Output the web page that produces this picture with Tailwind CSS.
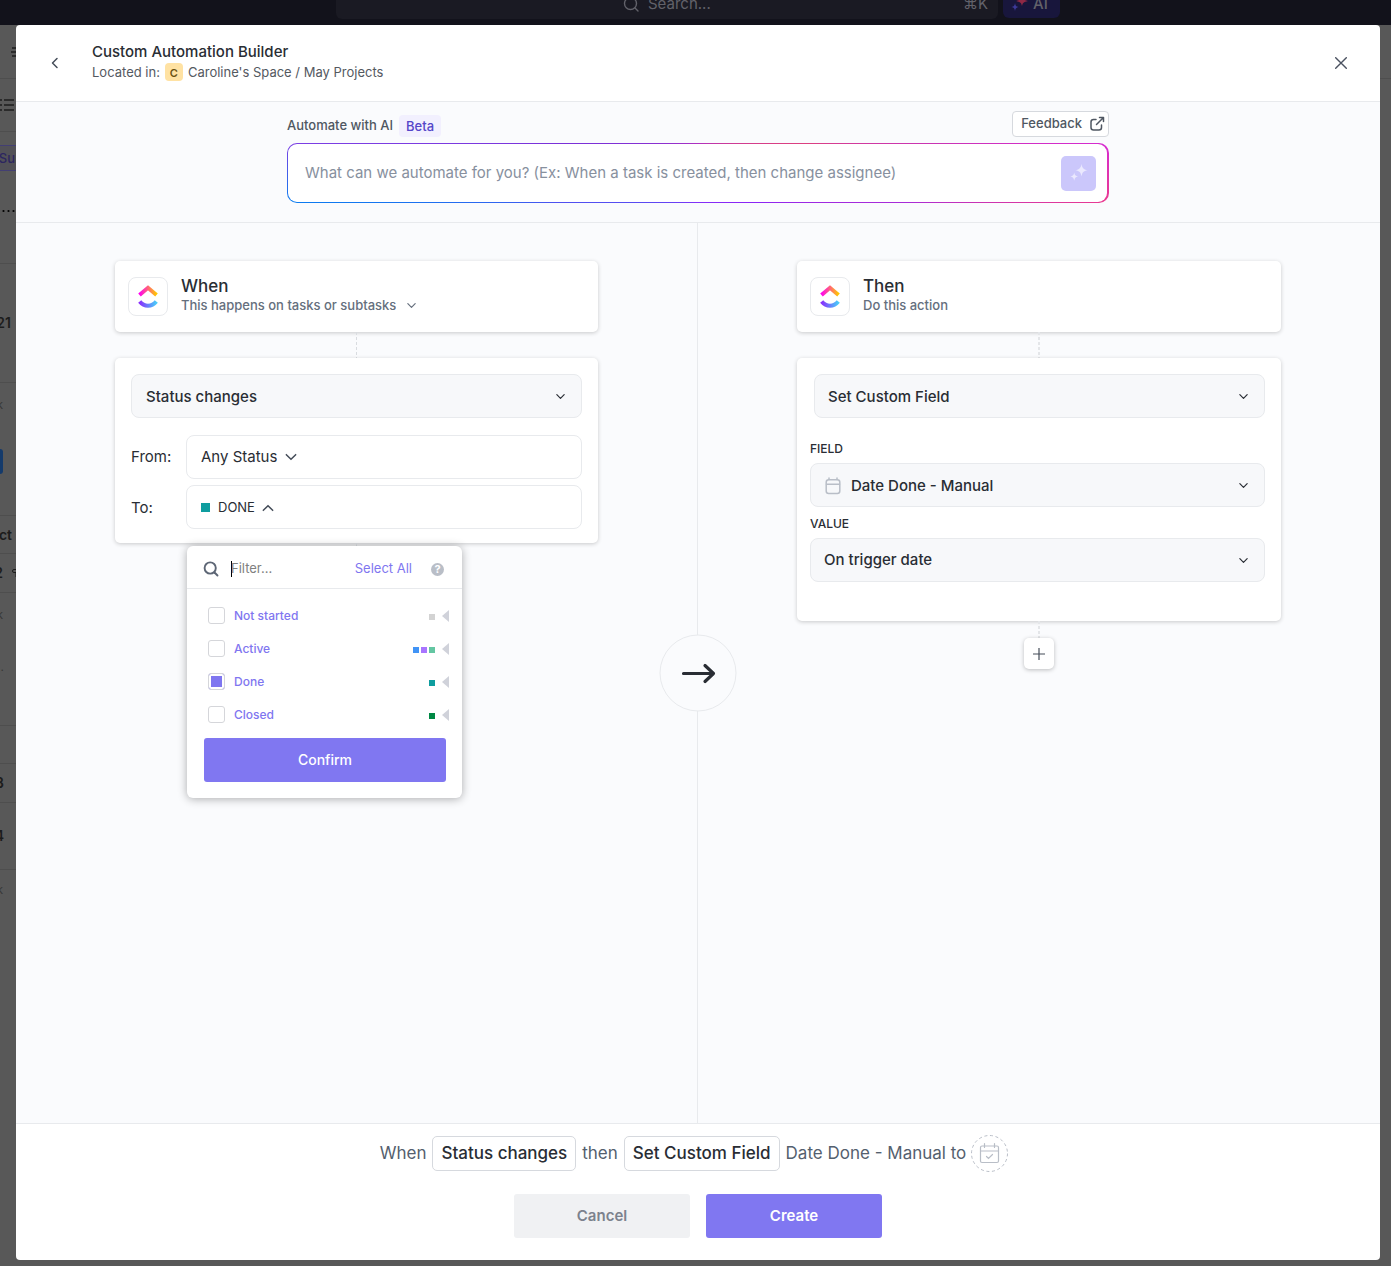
<!DOCTYPE html>
<html lang="en">
<head>
<meta charset="utf-8">
<meta name="viewport" content="width=device-width, initial-scale=1">
<title>Custom Automation Builder</title>
<script src="https://cdn.jsdelivr.net/npm/@tailwindcss/browser@4"></script>
</head>
<body class="relative flex min-h-screen flex-col bg-[#585858] font-['Inter',sans-serif] text-[#292d34]">

<svg class="absolute size-0" aria-hidden="true">
  <defs>
    <linearGradient id="logo-top" x1="0" x2="1" y1="0" y2="0"><stop offset="0" stop-color="#ff02f0"/><stop offset="1" stop-color="#ffc800"/></linearGradient>
    <linearGradient id="logo-bottom" x1="0" x2="1" y1="0" y2="0"><stop offset="0" stop-color="#8930fd"/><stop offset="1" stop-color="#49ccf9"/></linearGradient>
    <symbol id="down" viewBox="0 0 12 12"><path d="M2 4l4 4 4-4" fill="none" stroke="currentColor" stroke-width="1.300" stroke-linecap="round" stroke-linejoin="round"/></symbol>
    <symbol id="spark" viewBox="0 0 20 20"><path d="M12.500 1c.8 4.200 1.900 5.400 6 6.200-4.100.8-5.200 2-6 6.200-.8-4.200-1.900-5.400-6-6.200 4.100-.8 5.200-2 6-6.200zM5.200 9.500c.5 2.700 1.200 3.400 3.800 4-2.600.7-3.300 1.400-3.800 4.200-.5-2.800-1.200-3.500-3.800-4.200 2.600-.6 3.300-1.300 3.800-4z"/></symbol>
  </defs>
</svg>

<!-- App behind the dialog -->
<header class="relative grid h-[25px] grid-cols-[336px_1fr_57px_331px] overflow-hidden bg-[#12121b] text-[#62626a]">
  <div class="col-start-2 mr-[5px] flex h-[19px] items-start justify-between rounded-b-md bg-[#1a1a23] pr-2.5 pl-[287px] text-[15px] leading-4">
    <span class="-mt-1 flex gap-[9px]">
      <svg class="size-4" viewBox="0 0 16 16" fill="none" stroke="currentColor" stroke-width="1.4" stroke-linecap="round"><circle cx="7.500" cy="7.500" r="6"/><path d="M12 12l3 3"/></svg>
      Search...
    </span>
    <span class="-mt-1">⌘K</span>
  </div>
  <div class="flex h-[18px] items-start gap-1 rounded-b-md bg-[#18163c] pl-2 text-[15px] leading-4 font-medium">
    <svg class="-mt-1.5 h-[18px] w-[18px]" viewBox="0 0 18 18"><path d="M11 0c.7 5 1.500 6 6 7-4.500 1-5.300 2-6 5-.7-3-1.500-4-6-5 4.500-1 5.300-2 6-7z" fill="#8f2945"/><path d="M4 9c.4 2.800 1 3.400 3.500 4-2.500.6-3.100 1.200-3.500 4-.4-2.800-1-3.400-3.500-4C3 12.400 3.600 11.800 4 9z" fill="#3d3a9a"/></svg>
    <span class="-mt-1">AI</span>
  </div>
</header>
<div class="relative flex-1">
  <div class="h-[54px] border-b border-[#4e4e4e]"></div>
  <div class="absolute inset-y-0 left-0 w-4 overflow-hidden text-sm font-semibold text-[#1c1c1c]" aria-hidden="true">
    <div class="flex h-[54px] items-center justify-end border-b border-[#4e4e4e]">
      <svg class="h-3 w-[5px]" viewBox="0 0 5 12" stroke="currentColor" stroke-width="1.500"><path d="M1 2h4M0 6h5M1 10h4"/></svg>
    </div>
    <div class="flex h-[53px] items-center border-b border-[#4e4e4e]">
      <svg class="h-3.5 w-4" viewBox="0 0 16 14" stroke="currentColor" stroke-width="1.400"><path d="M4 2h10M4 7h10M4 12h10M0 2h2M0 7h2M0 12h2"/></svg>
    </div>
    <div class="h-[132px] border-b border-[#4e4e4e] pt-[13px]">
      <div class="flex h-[26px] items-center justify-end border-y border-[#433f73] bg-[#525157] pr-px text-[13px] font-medium text-[#2c2560]">Su</div>
      <svg class="mt-[38px] ml-0.5 h-1 w-3.5" viewBox="0 0 14 4"><circle cx="1.500" cy="2" r="1.100"/><circle cx="6.500" cy="2" r="1.100"/><circle cx="11.500" cy="2" r="1.100"/></svg>
    </div>
    <div class="flex h-[119px] items-center justify-end border-b border-[#4e4e4e] pr-[5px]">21</div>
    <div class="h-[133px] border-b border-[#4e4e4e] pt-3 text-xs font-normal text-[#383838]">
      <div class="flex h-5 items-center justify-end pr-[13px]">k</div>
      <div class="mt-[34px] h-[25px] w-[3px] rounded-r-sm bg-[#143a6b]"></div>
    </div>
    <div class="flex h-[38px] items-center justify-end border-b border-[#4e4e4e] pr-1">ct</div>
    <div class="flex h-[39px] items-center justify-end gap-[9px] border-b border-[#4e4e4e]">2
      <svg class="h-2.5 w-1 shrink-0" viewBox="0 0 4 10" fill="none" stroke="currentColor"><path d="M4 1.500H2a1 1 0 0 0 0 3h2M4 4v5"/></svg>
    </div>
    <div class="h-[133px] border-b border-[#4e4e4e] pt-3 text-xs font-normal text-[#383838]">
      <div class="flex h-5 items-center justify-end pr-[13px]">k</div>
      <div class="mt-[34px] flex justify-end pr-3">.</div>
    </div>
    <div class="h-[38px] border-b border-[#4e4e4e]"></div>
    <div class="flex h-[39px] items-center justify-end border-b border-[#4e4e4e] pr-3">3</div>
    <div class="flex h-[67px] items-center justify-end border-b border-[#4e4e4e] pr-3">4</div>
    <div class="flex justify-end pt-3 pr-[13px] text-xs font-normal text-[#383838]">k</div>
  </div>
</div>

<!-- Dialog -->
<main role="dialog" aria-labelledby="dialog-title" class="absolute top-[25px] right-[11px] bottom-1.5 left-4 flex flex-col rounded-[4px] bg-white">
  <header class="flex h-[77px] shrink-0 items-center border-b border-[#e8eaed] px-[27px]">
    <button type="button" aria-label="Back" class="grid size-6 place-items-center text-[#454d59]">
      <svg class="size-3" viewBox="0 0 12 12" fill="none" stroke="currentColor" stroke-width="1.500" stroke-linecap="round" stroke-linejoin="round"><path d="M8 1.500L3.500 6 8 10.500"/></svg>
    </button>
    <div class="ml-[25px] flex-1 pb-0.5">
      <h1 id="dialog-title" class="text-[15px] leading-5 font-medium">Custom Automation Builder</h1>
      <p class="flex items-center text-[13px] leading-5 text-[#54595f]">Located in:
        <span class="mx-[5px] grid size-[18px] place-items-center rounded-[4px] bg-[#ffe2a3] text-[11px] font-semibold text-[#6b5210]">C</span>Caroline's Space / May Projects</p>
    </div>
    <button type="button" aria-label="Close" class="grid size-6 place-items-center text-[#4a5160]">
      <svg class="size-3" viewBox="0 0 12 12" fill="none" stroke="currentColor" stroke-width="1.400" stroke-linecap="round"><path d="M.7.7l10.600 10.600M11.300.7L.7 11.300"/></svg>
    </button>
  </header>

  <section class="h-[121px] shrink-0 border-b border-[#e8eaed] bg-[#fafbfd] px-6 pt-[9px]">
    <div class="mx-auto max-w-[822px]">
      <div class="flex h-8 items-start justify-between text-[13px] font-medium text-[#4f5762]">
        <div class="flex items-start gap-1.5 pt-1">
          <label for="ai-prompt" class="leading-5">Automate with AI</label>
          <span class="rounded-[4px] bg-[#f2f0fe] px-[7px] leading-[22px] text-[#5546c9]">Beta</span>
        </div>
        <button type="button" class="flex h-[26px] items-center gap-[7px] rounded-[4px] border border-[#d6d9de] bg-white pr-[3px] pl-2">Feedback
          <svg class="size-4" viewBox="0 0 16 16" fill="none" stroke="currentColor" stroke-width="1.500" stroke-linecap="round" stroke-linejoin="round"><path d="M7 3.500H4.500a2.500 2.500 0 0 0-2.500 2.500v5.500A2.500 2.500 0 0 0 4.500 14h5.500a2.500 2.500 0 0 0 2.500-2.500V9M7.500 8.500l6.500-6.500M10.500 1.500h4v4"/></svg>
        </button>
      </div>
      <div class="h-[60px] rounded-[10px] bg-[conic-gradient(#b030c0_0deg,#dc4080_75deg,#c934b4_83deg,#d62bd0_86deg,#ea3a90_94deg,#a82bd8_98deg,#8b25f5_116deg,#8330f8_180deg,#5050f0_258deg,#0a7cf0_266deg,#7b3fe4_274deg,#7a30d8_282deg,#b030c0_360deg)] py-px pr-0.5 pl-px">
        <div class="flex h-full items-center rounded-[9px] bg-white pr-[11px] pl-[17px]">
          <input id="ai-prompt" type="text" placeholder="What can we automate for you? (Ex: When a task is created, then change assignee)" class="min-w-0 flex-1 text-[15px] outline-none placeholder:text-[#87909e]">
          <button type="button" aria-label="Generate" class="grid size-[35px] place-items-center rounded-[5px] bg-[#cbc7fb] text-[#ebe9fe]">
            <svg class="size-5" fill="currentColor"><use href="#spark"/></svg>
          </button>
        </div>
      </div>
    </div>
  </section>

  <div class="relative grid flex-1 grid-cols-2 bg-[#fafbfd]">
    <section class="flex flex-col border-r border-[#e8eaed] px-[99px] pt-[38px]">
      <div class="flex h-[71px] items-center gap-[13px] rounded-[5px] bg-white pl-[13px] shadow-[0_1px_4px_rgba(0,0,0,0.2)]">
        <span class="grid h-[39px] w-10 place-items-center rounded-lg border border-[#e8eaed]">
          <svg class="h-6 w-5" viewBox="0 0 20 24" fill="none" stroke-width="4"><path d="M1.500 10L10 2.800 18.500 10" stroke="url(#logo-top)"/><path d="M1.700 16.500c4.500 5.600 12.100 5.600 16.600 0" stroke="url(#logo-bottom)"/></svg>
        </span>
        <div class="pb-1">
          <h2 class="text-[17px] leading-5 font-medium">When</h2>
          <div class="flex items-center gap-2.5 text-[#656f7d]">
            <select aria-label="Trigger scope" class="field-sizing-content appearance-none bg-transparent text-[13px] leading-[18px] font-medium outline-none"><option>This happens on tasks or subtasks</option></select>
            <svg class="mt-0.5 size-[11px]"><use href="#down"/></svg>
          </div>
        </div>
      </div>
      <div class="h-[26px] w-px self-center bg-[repeating-linear-gradient(#d9dce0_0_3px,transparent_3px_5px)]"></div>
      <div class="flex flex-col rounded-[5px] bg-white px-4 pt-4 pb-3.5 shadow-[0_1px_4px_rgba(0,0,0,0.2)]">
        <div class="relative">
          <select aria-label="Trigger" class="h-11 w-full appearance-none rounded-lg border border-[#e8eaed] bg-[#f7f8fa] px-3.5 pt-0.5 text-[15px] font-medium outline-none"><option>Status changes</option></select>
          <svg class="pointer-events-none absolute top-[17px] right-4 size-[11px]"><use href="#down"/></svg>
        </div>
        <div class="mt-[17px] flex items-center text-[15px]">
          <label for="from" class="w-[55px]">From:</label>
          <div class="flex h-11 flex-1 items-center gap-[7px] rounded-lg border border-[#e8eaed] px-3.5">
            <select id="from" class="field-sizing-content appearance-none bg-transparent outline-none"><option>Any Status</option></select>
            <svg class="size-3.5 text-[#454d59]"><use href="#down"/></svg>
          </div>
        </div>
        <div class="mt-1.5 flex items-center text-[15px]">
          <label for="to" class="w-[55px] pt-0.5">To:</label>
          <div class="relative flex h-11 flex-1 rounded-lg border border-[#e8eaed]">
            <button id="to" type="button" aria-haspopup="true" aria-expanded="true" class="flex flex-1 items-center px-3.5 pt-px text-[13px]">
              <span class="mr-2 size-[9px] bg-[#0f9d9f]"></span>DONE
              <svg class="ml-1.5 size-3.5 rotate-180 text-[#454d59]"><use href="#down"/></svg>
            </button>

            <!-- Status picker -->
            <div class="absolute top-[60px] left-0 z-20 w-[275px] rounded-md bg-white pb-4 shadow-[0_1px_10px_rgba(0,0,0,0.32)]">
              <div class="flex h-[43px] items-center border-b border-[#e8eaed] pt-1 pr-[18px] pl-4 text-[13px]">
                <svg class="size-4 text-[#5d6675]" viewBox="0 0 16 16" fill="none" stroke="currentColor" stroke-width="1.900" stroke-linecap="round"><circle cx="7.200" cy="7" r="5.600"/><path d="M11.500 11.500l3 3"/></svg>
                <span class="ml-3 h-4 w-px bg-black"></span>
                <input type="text" aria-label="Filter statuses" placeholder="Filter..." class="-ml-px min-w-0 flex-1 outline-none placeholder:text-[#808080]">
                <button type="button" class="text-[#7f76f0]">Select All</button>
                <button type="button" aria-label="Help" class="ml-[19px] grid size-[13px] place-items-center rounded-full bg-[#b9bec7] text-[11px] leading-none font-bold text-white">?</button>
              </div>
              <ul class="px-[13px] pt-2.5 text-xs font-medium text-[#7f76f0]">
                <li class="flex h-[33px] items-center pl-2">
                  <input id="s1" type="checkbox" class="size-[17px] appearance-none rounded-[3px] border border-[#d5d6da] checked:bg-[#7f76f0] checked:shadow-[inset_0_0_0_2px_white]">
                  <label for="s1" class="flex-1 pl-[9px]">Not started</label>
                  <span class="mt-0.5 mr-[7px] flex gap-0.5"><i class="size-1.5 bg-[#d3d3d3]"></i></span>
                  <svg class="h-3 w-[7px]" viewBox="0 0 7 12" fill="#d0d2da"><path d="M7 0v12L0 6z"/></svg>
                </li>
                <li class="flex h-[33px] items-center pl-2">
                  <input id="s2" type="checkbox" class="size-[17px] appearance-none rounded-[3px] border border-[#d5d6da] checked:bg-[#7f76f0] checked:shadow-[inset_0_0_0_2px_white]">
                  <label for="s2" class="flex-1 pl-[9px]">Active</label>
                  <span class="mt-0.5 mr-[7px] flex gap-0.5"><i class="size-1.5 bg-[#4194f6]"></i><i class="size-1.5 bg-[#a875ff]"></i><i class="size-1.5 bg-[#64c6a2]"></i></span>
                  <svg class="h-3 w-[7px]" viewBox="0 0 7 12" fill="#d0d2da"><path d="M7 0v12L0 6z"/></svg>
                </li>
                <li class="flex h-[33px] items-center pl-2">
                  <input id="s3" type="checkbox" checked class="size-[17px] appearance-none rounded-[3px] border border-[#d5d6da] checked:bg-[#7f76f0] checked:shadow-[inset_0_0_0_2px_white]">
                  <label for="s3" class="flex-1 pl-[9px]">Done</label>
                  <span class="mt-0.5 mr-[7px] flex gap-0.5"><i class="size-1.5 bg-[#0f9d9f]"></i></span>
                  <svg class="h-3 w-[7px]" viewBox="0 0 7 12" fill="#d0d2da"><path d="M7 0v12L0 6z"/></svg>
                </li>
                <li class="flex h-[33px] items-center pl-2">
                  <input id="s4" type="checkbox" class="size-[17px] appearance-none rounded-[3px] border border-[#d5d6da] checked:bg-[#7f76f0] checked:shadow-[inset_0_0_0_2px_white]">
                  <label for="s4" class="flex-1 pl-[9px]">Closed</label>
                  <span class="mt-0.5 mr-[7px] flex gap-0.5"><i class="size-1.5 bg-[#008844]"></i></span>
                  <svg class="h-3 w-[7px]" viewBox="0 0 7 12" fill="#d0d2da"><path d="M7 0v12L0 6z"/></svg>
                </li>
              </ul>
              <div class="pt-[7px] pr-4 pl-[17px]">
                <button type="button" class="h-11 w-full rounded-[3px] bg-[#8077f1] text-sm font-medium text-white">Confirm</button>
              </div>
            </div>
          </div>
        </div>
      </div>
      <div class="h-[17px] w-px self-center bg-[repeating-linear-gradient(#d9dce0_0_3px,transparent_3px_5px)]"></div>
    </section>

    <section class="flex flex-col px-[99px] pt-[38px]">
      <div class="flex h-[71px] items-center gap-[13px] rounded-[5px] bg-white pl-[13px] shadow-[0_1px_4px_rgba(0,0,0,0.2)]">
        <span class="grid h-[39px] w-10 place-items-center rounded-lg border border-[#e8eaed]">
          <svg class="h-6 w-5" viewBox="0 0 20 24" fill="none" stroke-width="4"><path d="M1.500 10L10 2.800 18.500 10" stroke="url(#logo-top)"/><path d="M1.700 16.500c4.500 5.600 12.100 5.600 16.600 0" stroke="url(#logo-bottom)"/></svg>
        </span>
        <div class="pb-1">
          <h2 class="text-[17px] leading-5 font-medium">Then</h2>
          <p class="text-[13px] leading-[18px] font-medium text-[#656f7d]">Do this action</p>
        </div>
      </div>
      <div class="h-[26px] w-0.5 self-center bg-[repeating-linear-gradient(#e4e6e9_0_3px,transparent_3px_5px)]"></div>
      <div class="flex flex-col rounded-[5px] bg-white pt-4 pr-4 pb-[39px] pl-[13px] text-[15px] font-medium shadow-[0_1px_4px_rgba(0,0,0,0.2)]">
        <div class="relative ml-1">
          <select aria-label="Action" class="h-11 w-full appearance-none rounded-lg border border-[#e8eaed] bg-[#f7f8fa] px-[13px] pt-0.5 outline-none"><option>Set Custom Field</option></select>
          <svg class="pointer-events-none absolute top-[17px] right-4 size-[11px]"><use href="#down"/></svg>
        </div>
        <label for="field" class="mt-[21px] text-xs leading-5">FIELD</label>
        <div class="relative mt-1">
          <select id="field" class="h-11 w-full appearance-none rounded-lg border border-[#e8eaed] bg-[#f7f8fa] pt-0.5 pr-8 pl-10 outline-none"><option>Date Done - Manual</option></select>
          <svg class="pointer-events-none absolute top-3.5 left-[15px] h-[18px] w-4 text-[#b9bec7]" viewBox="0 0 16 18" fill="none" stroke="currentColor" stroke-width="1.500" stroke-linecap="round"><rect x="1.200" y="2.800" width="13.600" height="13.800" rx="2.500"/><path d="M1.500 7.200h13M4 1v1.500M12 1v1.500"/></svg>
          <svg class="pointer-events-none absolute top-[17px] right-4 size-[11px]"><use href="#down"/></svg>
        </div>
        <label for="value" class="mt-[7px] text-xs leading-5">VALUE</label>
        <div class="relative mt-1">
          <select id="value" class="h-11 w-full appearance-none rounded-lg border border-[#e8eaed] bg-[#f7f8fa] px-[13px] outline-none"><option>On trigger date</option></select>
          <svg class="pointer-events-none absolute top-[17px] right-4 size-[11px]"><use href="#down"/></svg>
        </div>
      </div>
      <div class="h-[17px] w-0.5 self-center bg-[repeating-linear-gradient(#e4e6e9_0_3px,transparent_3px_5px)]"></div>
      <button type="button" aria-label="Add action" class="grid h-[31px] w-[30px] place-items-center self-center rounded-[5px] bg-white text-[#454d59] shadow-[0_1px_4px_rgba(0,0,0,0.25)]">
        <svg class="size-3" viewBox="0 0 12 12" stroke="currentColor" stroke-width="1.200"><path d="M6 0v12M0 6h12"/></svg>
      </button>
    </section>

    <div class="absolute top-1/2 left-1/2 grid size-[77px] -translate-1/2 place-items-center rounded-full border border-[#e8eaed] bg-[#fafbfd]" aria-hidden="true">
      <svg class="h-5 w-[34px]" viewBox="0 0 34 20" fill="none" stroke="#292d34" stroke-width="3.200" stroke-linecap="round" stroke-linejoin="round"><path d="M2 10h29.500M23.500 2l8.500 8-8.500 8"/></svg>
    </div>
  </div>

  <footer class="flex h-[137px] shrink-0 flex-col items-center border-t border-[#e8eaed] pt-[11px]">
    <p class="flex items-center gap-1.5 pr-2 text-[17px] text-[#54606e]">When
      <button type="button" class="h-[35px] rounded-[5px] border border-[#d6d9de] px-2 font-medium text-[#292d34]">Status changes</button>
      then
      <button type="button" class="h-[35px] rounded-[5px] border border-[#d6d9de] px-2 font-medium text-[#292d34]">Set Custom Field</button>
      Date Done - Manual to
      <svg class="-ml-px size-[37px] text-[#b9bec7]" viewBox="0 0 37 37" fill="none" stroke="currentColor"><circle cx="18.500" cy="18.500" r="18" stroke-dasharray="3 2.650"/><g stroke-width="1.200" stroke-linecap="round"><rect x="9.500" y="11" width="18" height="16.500" rx="1.500"/><path d="M9.500 16h18M13.500 8.500v4M23.500 8.500v4M15.500 21.500l2 2 4-4"/></g></svg>
    </p>
    <div class="mt-[22px] flex gap-4 text-[15px] font-semibold">
      <button type="button" class="h-11 w-44 rounded-[3px] bg-[#f0f1f3] text-[#7c828d]">Cancel</button>
      <button type="button" class="h-11 w-44 rounded-[3px] bg-[#8077f1] text-white">Create</button>
    </div>
  </footer>
</main>
</body>
</html>
